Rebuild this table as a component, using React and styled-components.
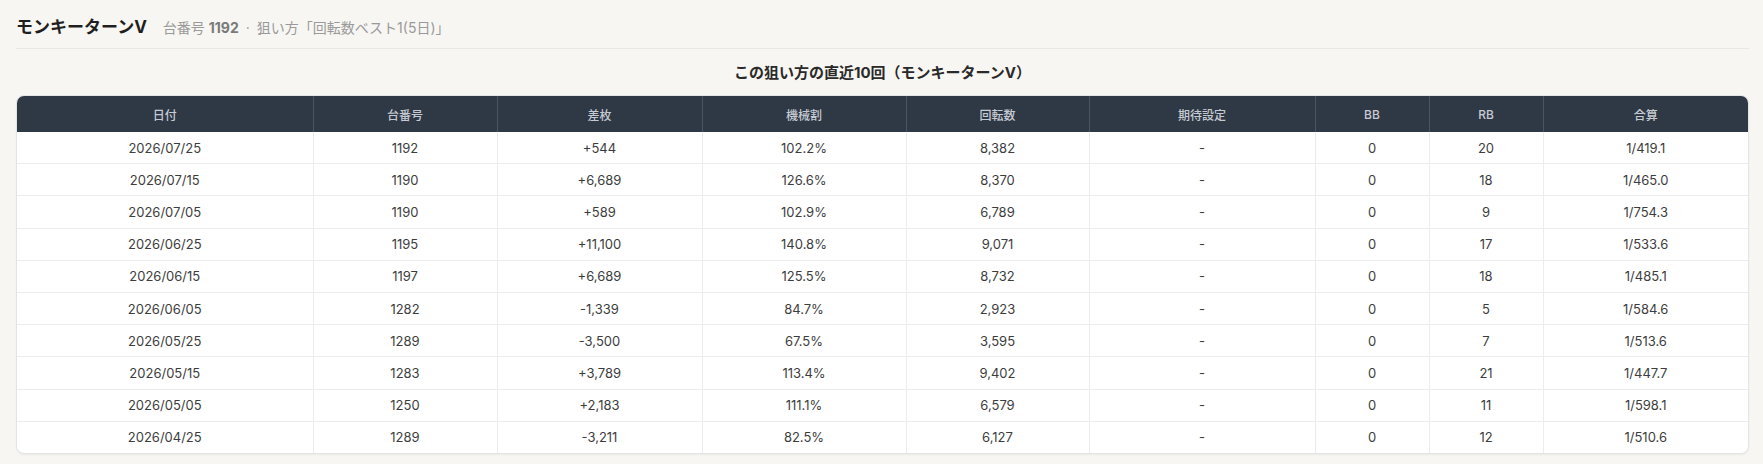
import React from "react";
import styled, { createGlobalStyle } from "styled-components";

const Global = createGlobalStyle`
  html, body { margin: 0; padding: 0; background: #f7f6f2; }
  body {
    font-family: Inter, "Noto Sans CJK JP", "Noto Sans", sans-serif;
    color: #333;
    -webkit-font-smoothing: antialiased;
  }
`;

const Page = styled.div`
  padding: 0 14px 10px 16px;
`;

const Header = styled.header`
  display: flex;
  align-items: baseline;
  gap: 16px;
  padding: 16px 0 10px;
  border-bottom: 1px solid #e8e7e2;
`;

const Title = styled.h1`
  margin: 0;
  font-size: 17px;
  line-height: 22px;
  font-weight: 700;
  color: #1f1f1f;
`;

const Meta = styled.div`
  font-size: 14px;
  color: #9a9a9a;
  display: flex;
  gap: 7px;
  align-items: baseline;
`;

const Strong = styled.b`
  font-weight: 700;
  color: #7a7a7a;
`;

const Caption = styled.h2`
  margin: 14px 0 12px;
  font-size: 15px;
  line-height: 20px;
  font-weight: 700;
  text-align: center;
  color: #2a2a2a;
`;

const TableBox = styled.div`
  border: 1px solid #e3e4e6;
  border-radius: 8px;
  overflow: hidden;
  background: #fff;
  box-shadow: 0 1px 2px rgba(0, 0, 0, 0.05);
`;

const Table = styled.table`
  width: 100%;
  border-collapse: collapse;
  table-layout: fixed;
`;

const Col = styled.col`
  width: ${(p) => p.$w}px;
`;

const Th = styled.th`
  height: 36px;
  padding: 0 8px;
  background: #2f3845;
  color: #c6cbd3;
  font-size: 12px;
  font-weight: 500;
  text-align: center;
  border-left: 1px solid #4a5360;
  &:first-child { border-left: none; }
`;

const Tr = styled.tr`
  & + & td { border-top: 1px solid #ebecee; }
`;

const Td = styled.td`
  height: 31.2px;
  padding: 0 8px;
  font-size: 13px;
  color: #3d3d3d;
  text-align: center;
  border-left: 1px solid #ebecee;
  &:first-child { border-left: none; }
`;

const cols = [
  ["日付", 296],
  ["台番号", 184],
  ["差枚", 205],
  ["機械割", 204],
  ["回転数", 183],
  ["期待設定", 226],
  ["BB", 114],
  ["RB", 114],
  ["合算", 205],
];

const rows = [
  ["2026/07/25", "1192", "+544", "102.2%", "8,382", "-", "0", "20", "1/419.1"],
  ["2026/07/15", "1190", "+6,689", "126.6%", "8,370", "-", "0", "18", "1/465.0"],
  ["2026/07/05", "1190", "+589", "102.9%", "6,789", "-", "0", "9", "1/754.3"],
  ["2026/06/25", "1195", "+11,100", "140.8%", "9,071", "-", "0", "17", "1/533.6"],
  ["2026/06/15", "1197", "+6,689", "125.5%", "8,732", "-", "0", "18", "1/485.1"],
  ["2026/06/05", "1282", "-1,339", "84.7%", "2,923", "-", "0", "5", "1/584.6"],
  ["2026/05/25", "1289", "-3,500", "67.5%", "3,595", "-", "0", "7", "1/513.6"],
  ["2026/05/15", "1283", "+3,789", "113.4%", "9,402", "-", "0", "21", "1/447.7"],
  ["2026/05/05", "1250", "+2,183", "111.1%", "6,579", "-", "0", "11", "1/598.1"],
  ["2026/04/25", "1289", "-3,211", "82.5%", "6,127", "-", "0", "12", "1/510.6"],
];

export default function App() {
  return (
    <>
      <Global />
      <Page>
        <Header>
          <Title>モンキーターンV</Title>
          <Meta>
            <span>
              台番号 <Strong>1192</Strong>
            </span>
            <span>·</span>
            <span>狙い方「回転数ベスト1(5日)」</span>
          </Meta>
        </Header>
        <Caption>この狙い方の直近10回（モンキーターンV）</Caption>
        <TableBox>
          <Table>
            <colgroup>
              {cols.map(([n, w]) => (
                <Col key={n} $w={w} />
              ))}
            </colgroup>
            <thead>
              <tr>
                {cols.map(([n]) => (
                  <Th key={n}>{n}</Th>
                ))}
              </tr>
            </thead>
            <tbody>
              {rows.map((r, i) => (
                <Tr key={i}>
                  {r.map((c, j) => (
                    <Td key={j}>{c}</Td>
                  ))}
                </Tr>
              ))}
            </tbody>
          </Table>
        </TableBox>
      </Page>
    </>
  );
}
